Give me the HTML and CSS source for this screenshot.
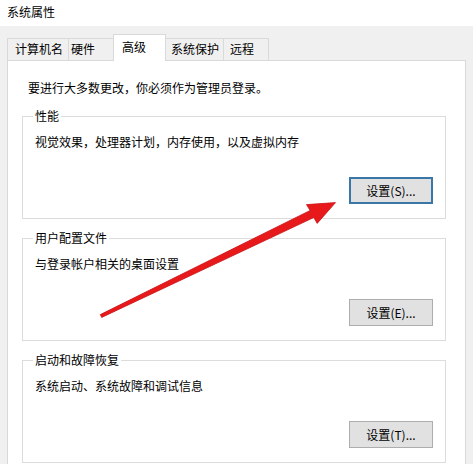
FILE: index.html
```html
<!DOCTYPE html>
<html lang="zh-CN">
<head>
<meta charset="utf-8">
<title>系统属性</title>
<link rel="stylesheet" href="styles.css">
</head>
<body>
<div class="window">
  <div class="titlebar">系统属性</div>
  <div class="tabs">
    <div class="tab tab-computer">计算机名</div>
    <div class="tab tab-hardware">硬件</div>
    <div class="tab tab-advanced active">高级</div>
    <div class="tab tab-protect">系统保护</div>
    <div class="tab tab-remote">远程</div>
  </div>
  <div class="panel">
    <p class="notice">要进行大多数更改，你必须作为管理员登录。</p>
    <fieldset class="group">
      <legend>性能</legend>
      <p class="desc">视觉效果，处理器计划，内存使用，以及虚拟内存</p>
      <div class="actions"><button class="btn focused">设置(S)...</button></div>
    </fieldset>
    <fieldset class="group">
      <legend>用户配置文件</legend>
      <p class="desc">与登录帐户相关的桌面设置</p>
      <div class="actions"><button class="btn">设置(E)...</button></div>
    </fieldset>
    <fieldset class="group">
      <legend>启动和故障恢复</legend>
      <p class="desc">系统启动、系统故障和调试信息</p>
      <div class="actions"><button class="btn">设置(T)...</button></div>
    </fieldset>
  </div>
  <svg class="arrow" width="473" height="464" viewBox="0 0 473 464" xmlns="http://www.w3.org/2000/svg">
    <polygon points="100.3,314.6 310.1,210.5 306.5,204.6 335.5,202.6 317.2,223.4 313.8,217.5 101.7,317.4" fill="#e8191b" stroke="#c8161a" stroke-width="0.8" stroke-linejoin="round"/>
  </svg>
</div>
</body>
</html>
```

FILE: styles.css
```css
html, body {
  margin: 0;
  padding: 0;
}

body {
  background: #f0f0f0;
  font-family: "Noto Sans CJK SC", "Microsoft YaHei", sans-serif;
  font-size: 12px;
  line-height: 16px;
  color: #000;
}

.window {
  position: relative;
  width: 473px;
  height: 464px;
  overflow: hidden;
  background: #f0f0f0;
}

.titlebar {
  height: 26px;
  line-height: 24px;
  padding-left: 7px;
  background: #fff;
  font-size: 12px;
}

.tabs {
  display: flex;
  align-items: flex-end;
  height: 34px;
  padding-left: 7px;
  position: relative;
  z-index: 2;
}

.tab {
  box-sizing: border-box;
  height: 22px;
  line-height: 20px;
  border: 1px solid #d9d9d9;
  border-bottom: none;
  background: #f0f0f0;
  margin-left: -1px;
  padding-left: 6px;
  white-space: nowrap;
}

.tab-computer {
  width: 62px;
  margin-left: 0;
  padding-left: 7px;
}

.tab-hardware {
  width: 48px;
  padding-left: 2px;
}

.tab.active {
  width: 53px;
  height: 27px;
  line-height: 24px;
  margin-left: -3px;
  margin-right: -2px;
  margin-bottom: -1px;
  padding-left: 8px;
  background: #fff;
  position: relative;
  z-index: 3;
}

.tab-protect {
  width: 61px;
  padding-left: 7px;
}

.tab-remote {
  width: 46px;
  padding-left: 6px;
}

.panel {
  box-sizing: border-box;
  margin: 0 7px 0 7px;
  height: 420px;
  border: 1px solid #d9d9d9;
  background: #fff;
  padding: 19px 19px 0 14px;
  display: flex;
  flex-direction: column;
  gap: 11px;
}

.notice {
  margin: 0 0 1px 6px;
}

.group {
  margin: 0;
  padding: 10px 12px 14px 12px;
  border: 1px solid #dcdcdc;
  min-width: 0;
}

.group legend {
  margin-left: -2px;
  padding: 0 2px;
  line-height: 16px;
}

.desc {
  margin: 0;
}

.actions {
  display: flex;
  justify-content: flex-end;
  margin-top: 27px;
}

.btn {
  box-sizing: border-box;
  width: 84px;
  height: 27px;
  margin: 0;
  padding: 0;
  border: 1px solid #adadad;
  background: #e1e1e1;
  font-family: "Noto Sans CJK SC", "Microsoft YaHei", sans-serif;
  font-size: 12px;
  line-height: 16px;
  color: #000;
}

.btn.focused {
  border: 2px solid #3a77a6;
}

.arrow {
  position: absolute;
  left: 0;
  top: 0;
  z-index: 5;
  pointer-events: none;
}
```
